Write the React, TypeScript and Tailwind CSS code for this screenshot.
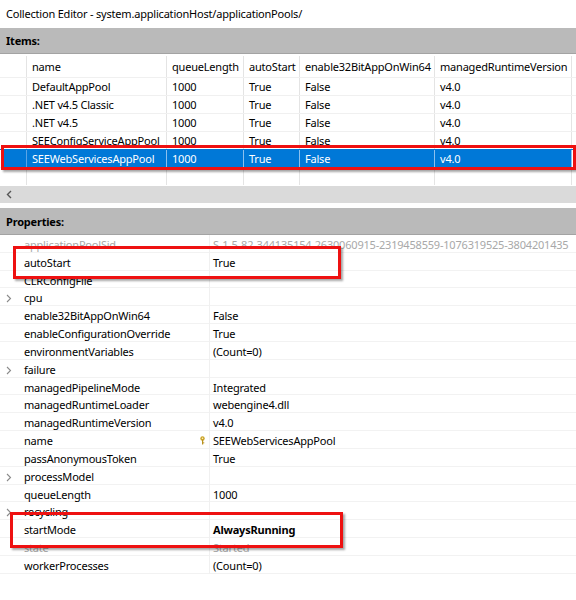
import React from "react";

type Pool = { name: string; queueLength: string; autoStart: string; enable32: string; runtime: string };

const pools: Pool[] = [
  { name: "DefaultAppPool", queueLength: "1000", autoStart: "True", enable32: "False", runtime: "v4.0" },
  { name: ".NET v4.5 Classic", queueLength: "1000", autoStart: "True", enable32: "False", runtime: "v4.0" },
  { name: ".NET v4.5", queueLength: "1000", autoStart: "True", enable32: "False", runtime: "v4.0" },
  { name: "SEEConfigServiceAppPool", queueLength: "1000", autoStart: "True", enable32: "False", runtime: "v4.0" },
  { name: "SEEWebServicesAppPool", queueLength: "1000", autoStart: "True", enable32: "False", runtime: "v4.0" },
];

type Prop = { name: string; value?: string; expandable?: boolean; readOnly?: boolean; bold?: boolean; key?: boolean };

const props: Prop[] = [
  { name: "applicationPoolSid", value: "S-1-5-82-344135154-2630060915-2319458559-1076319525-3804201435", readOnly: true },
  { name: "autoStart", value: "True" },
  { name: "CLRConfigFile", value: "" },
  { name: "cpu", expandable: true },
  { name: "enable32BitAppOnWin64", value: "False" },
  { name: "enableConfigurationOverride", value: "True" },
  { name: "environmentVariables", value: "(Count=0)" },
  { name: "failure", expandable: true },
  { name: "managedPipelineMode", value: "Integrated" },
  { name: "managedRuntimeLoader", value: "webengine4.dll" },
  { name: "managedRuntimeVersion", value: "v4.0" },
  { name: "name", value: "SEEWebServicesAppPool", key: true },
  { name: "passAnonymousToken", value: "True" },
  { name: "processModel", expandable: true },
  { name: "queueLength", value: "1000" },
  { name: "recycling", expandable: true },
  { name: "startMode", value: "AlwaysRunning", bold: true },
  { name: "state", value: "Started", readOnly: true },
  { name: "workerProcesses", value: "(Count=0)" },
];

const font = { fontFamily: '"Noto Sans", "Open Sans", sans-serif' };

function Chevron({ dir }: { dir: "left" | "right" }) {
  return (
    <svg width="6" height="9" viewBox="0 0 6 9">
      {dir === "right" ? (
        <path d="M1 1 L4.5 4.5 L1 8" fill="none" stroke="currentColor" strokeWidth="1.1" />
      ) : (
        <path d="M5 1 L1.5 4.5 L5 8" fill="none" stroke="currentColor" strokeWidth="1.4" />
      )}
    </svg>
  );
}

function KeyIcon() {
  return (
    <svg width="7" height="9" viewBox="0 0 7 9">
      <circle cx="3.5" cy="2.5" r="2.2" fill="#c9a227" />
      <circle cx="3.5" cy="2.3" r="0.8" fill="#fff4c8" />
      <rect x="3" y="4" width="1.2" height="4.5" fill="#b8901c" />
      <rect x="4" y="6.4" width="1.3" height="0.9" fill="#b8901c" />
    </svg>
  );
}

function RedBox({ className }: { className: string }) {
  return (
    <div
      className={`absolute border-[3px] border-[#ee1111] shadow-[2px_2px_2px_rgba(0,0,0,0.35)] pointer-events-none ${className}`}
    />
  );
}

const cols = "grid grid-cols-[27px_140px_77px_56px_135px_137px_1fr]";

export default function App() {
  return (
    <div
      className="relative w-[576px] h-[600px] bg-white text-[11px] tracking-[-0.2px] text-black overflow-hidden"
      style={font}
    >
      {/* window title */}
      <div className="h-[28px] flex items-center pl-[6px] pt-[1px]">
        Collection Editor - system.applicationHost/applicationPools/
      </div>

      {/* Items section */}
      <div className="h-[26px] bg-[#bababa] border-b border-[#a3a3a3] flex items-center pl-[6px] pt-[1px] font-bold">
        Items:
      </div>
      <div className="h-[2px]" />
      <div className="flex flex-col">
        <div className={`${cols} h-[21px]`}>
          <div className="border-r border-[#e4e4e4]" />
          {["name", "queueLength", "autoStart", "enable32BitAppOnWin64", "managedRuntimeVersion"].map((h) => (
            <div key={h} className="border-r border-[#e4e4e4] pl-[5px] pt-[1px] flex items-center whitespace-nowrap overflow-hidden">
              {h}
            </div>
          ))}
          <div />
        </div>
        {pools.map((p, i) => {
          const sel = i === 4;
          return (
            <div key={p.name} className={`${cols} h-[18px] border-t ${sel ? "border-[#0078d7]" : "border-[#f0f0f0]"}`}>
              <div className={sel ? "ml-[4px] bg-[#0078d7] border-r border-[#5aa4e6]" : "border-r border-[#e4e4e4]"} />
              {[p.name, p.queueLength, p.autoStart, p.enable32, p.runtime].map((v, j) => (
                <div
                  key={j}
                  className={`${sel ? "bg-[#0078d7] text-white border-r border-[#8cc0ee]" : "border-r border-[#e4e4e4]"} pl-[5px] pt-[1px] flex items-center whitespace-nowrap overflow-hidden`}
                >
                  {v}
                </div>
              ))}
              <div />
            </div>
          );
        })}
        <div className={`${cols} h-[18px] border-t border-[#f0f0f0]`}>
          {Array.from({ length: 6 }).map((_, j) => (
            <div key={j} className="border-r border-[#e4e4e4]" />
          ))}
          <div />
        </div>
      </div>

      {/* horizontal scrollbar */}
      <div className="mt-[1px] h-[17px] bg-[#dadada] flex items-center pl-[6px] text-[#555]">
        <Chevron dir="left" />
      </div>
      <div className="h-[5px]" />

      {/* Properties section */}
      <div className="h-[27px] bg-[#bababa] border-b border-[#a3a3a3] flex items-center pl-[6px] pt-[3px] font-bold">
        Properties:
      </div>
      <div className="flex flex-col">
        {props.map((p) => (
          <div key={p.name} className="grid grid-cols-[20px_190px_1fr] h-[17.83px] border-b border-[#f2f2f2]">
            <div className="flex items-center pl-[6px] pt-[2px] text-[#8a8a8a]">
              {p.expandable && <Chevron dir="right" />}
            </div>
            <div
              className={`relative flex items-center pl-[4px] pt-[2px] border-r border-[#f0f0f0] whitespace-nowrap ${p.readOnly ? "text-[#a8a8a8]" : ""}`}
            >
              {p.name}
              {p.key && (
                <span className="absolute right-[3px] top-[5px] flex">
                  <KeyIcon />
                </span>
              )}
            </div>
            <div
              className={`flex items-center pl-[3px] pt-[2px] whitespace-nowrap overflow-hidden ${p.readOnly ? "text-[#a8a8a8]" : ""} ${p.bold ? "font-bold" : ""}`}
            >
              {p.value}
            </div>
          </div>
        ))}
      </div>

      {/* highlight frames */}
      <RedBox className="left-[1px] top-[145px] w-[575px] h-[25px]" />
      <RedBox className="left-[13px] top-[246px] w-[328px] h-[33px]" />
      <RedBox className="left-[10px] top-[512px] w-[333px] h-[36px]" />
    </div>
  );
}
